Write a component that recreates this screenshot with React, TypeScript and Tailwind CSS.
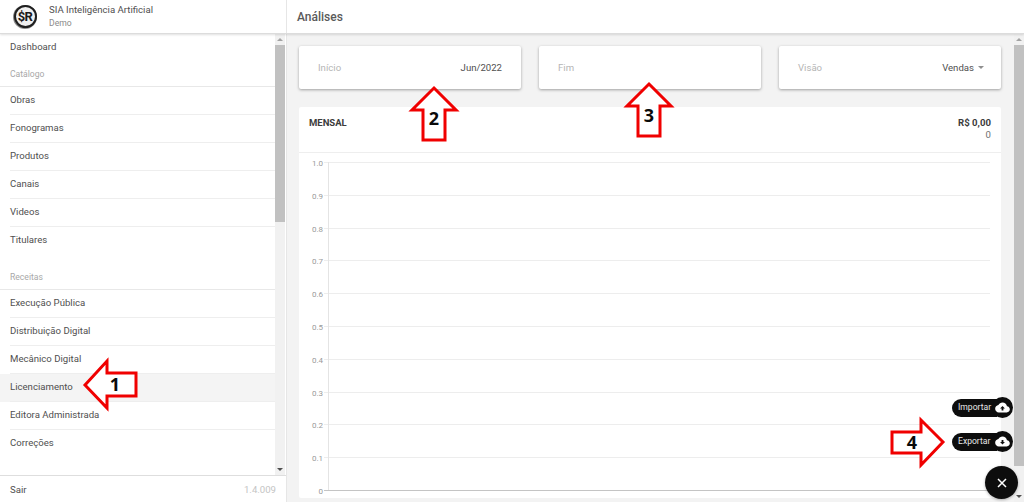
import React from "react";

const ScrollBar = ({ thumbHeight }: { thumbHeight: number }) => (
  <div className="w-[10px] shrink-0 bg-[#f1f1f1] flex flex-col items-center">
    <div className="h-[11px] shrink-0 flex items-center justify-center">
      <div className="w-0 h-0 border-x-[3px] border-x-transparent border-b-[3px] border-b-[#a3a3a3]" />
    </div>
    <div className="flex-1 w-full">
      <div className="w-full bg-[#c1c1c1]" style={{ height: thumbHeight }} />
    </div>
    <div className="h-[11px] shrink-0 flex items-center justify-center">
      <div className="w-0 h-0 border-x-[3px] border-x-transparent border-t-[3px] border-t-[#505050]" />
    </div>
  </div>
);

const Item = ({ label }: { label: string }) => (
  <div className="h-[28px] pb-px pl-[10px] flex items-center">
    <span className="text-[9.6px] text-[#4f4f4f]">{label}</span>
  </div>
);

const Row = ({ label, active }: { label: string; active?: boolean }) => (
  <div className={active ? "bg-[#f4f4f4]" : ""}>
    <div className="h-[27px] pl-[10px] flex items-center">
      <span className="text-[9.6px] text-[#4f4f4f]">{label}</span>
    </div>
    <div className="ml-[10px] h-px bg-[#eeeeee]" />
  </div>
);

const Section = ({ label }: { label: string }) => (
  <div className="h-[25px] flex flex-col justify-end">
    <div className="pl-[10px] pb-[6px] text-[8.6px] text-[#a8a8a8] leading-[12px]">{label}</div>
    <div className="h-px bg-[#e8e8e8]" />
  </div>
);

const Filter = ({ label, value, caret }: { label: string; value?: string; caret?: boolean }) => (
  <div className="flex-1 h-[43px] bg-white rounded-[2px] shadow-[0_1px_3px_rgba(0,0,0,0.35)] pt-px pl-[19px] pr-[19px] flex items-center justify-between">
    <span className="text-[9.6px] text-[#b5b5b5]">{label}</span>
    {value && (
      <span className="flex items-center gap-[4px] text-[9.6px] text-[#4f4f4f]">
        {value}
        {caret && <span className="w-0 h-0 border-x-[3.5px] border-x-transparent border-t-[3.5px] border-t-[#8f8f8f] mr-[-2px]" />}
      </span>
    )}
  </div>
);

const Cloud = ({ up }: { up?: boolean }) => (
  <svg width="15" height="11" viewBox="0 0 24 18">
    <path
      fill="#fff"
      d="M19.35 7.04C18.67 3.59 15.64 1 12 1 9.11 1 6.6 2.64 5.35 5.04 2.34 5.36 0 7.91 0 11c0 3.31 2.69 6 6 6h13c2.76 0 5-2.24 5-5 0-2.64-2.05-4.78-4.65-4.96z"
    />
    {up ? (
      <path fill="#111" d="M12 6.500 8 10.500H10.500V14H13.500V10.500H16Z" />
    ) : (
      <path fill="#111" d="M10.500 6.500H13.500V10H16L12 14 8 10H10.500Z" />
    )}
  </svg>
);

const Pill = ({ label, up }: { label: string; up?: boolean }) => (
  <div className="w-[61px] h-[21px] flex items-center">
    <div className="w-[45px] h-[18px] mr-[-5px] bg-[#0d0d0d] rounded-l-full pl-[6px] flex items-center">
      <span className="text-[8.6px] text-[#e8e8e8]">{label}</span>
    </div>
    <div className="w-[21px] h-[21px] shrink-0 rounded-full bg-[#0d0d0d] flex items-center justify-center">
      <Cloud up={up} />
    </div>
  </div>
);

const ticks = ["1.0", "0.9", "0.8", "0.7", "0.6", "0.5", "0.4", "0.3", "0.2", "0.1", "0"];

const Chart = () => (
  <svg width="702" height="345" className="block" fontFamily="Roboto, sans-serif">
    {ticks.map((t, i) => {
      const y = Math.round(9 + i * 32.8) + 0.5;
      const last = i === ticks.length - 1;
      return (
        <g key={t}>
          <text x="24" y={y + 3} textAnchor="end" fontSize="8" fill="#9a9a9a">
            {t}
          </text>
          <line x1="25" x2="691" y1={y} y2={y} stroke={last ? "#c4c4c4" : "#ededed"} strokeWidth="1" />
        </g>
      );
    })}
    <line x1="29.5" x2="29.500" y1="9" y2="337" stroke="#e4e4e4" />
  </svg>
);

type Pt = [number, number];
const Arrow = ({ points, num, nx, ny }: { points: Pt[]; num: string; nx: number; ny: number }) => (
  <g>
    <polygon
      points={points.map((p) => p.join(",")).join(" ")}
      fill="#fff"
      stroke="#f00000"
      strokeWidth="3"
      strokeLinejoin="miter"
    />
    <text x={nx} y={ny} textAnchor="middle" fontSize="18" fontWeight="700" fill="#0a0a0a" fontFamily="'Open Sans', sans-serif">
      {num}
    </text>
  </g>
);

export default function App() {
  return (
    <div className="relative w-[1024px] h-[502px] overflow-hidden bg-[#f3f3f3] font-['Roboto',sans-serif] flex flex-col">
      <header className="h-[34px] shrink-0 bg-white flex border-b border-[#dcdcdc] shadow-[0_1px_2px_rgba(0,0,0,0.12)] z-10">
        <div className="w-[287px] shrink-0 flex items-center border-r border-[#e6e6e6] pl-[13px]">
          <div className="w-[24px] h-[24px] rounded-full bg-[#8a8a8a] flex items-center justify-center">
            <div className="w-[23px] h-[23px] rounded-full bg-[#f0f0f0] border-[2px] border-[#1f1f1f] flex items-center justify-center">
              <span className="text-[13px] font-bold text-[#1a1a1a] leading-none tracking-[-0.7px]">$R</span>
            </div>
          </div>
          <div className="ml-[12px] flex flex-col">
            <span className="text-[9.6px] leading-[12px] text-[#4f4f4f]">SIA Inteligência Artificial</span>
            <span className="text-[8.6px] leading-[12px] mt-[1px] text-[#8a8a8a]">Demo</span>
          </div>
        </div>
        <div className="flex-1 flex items-center pl-[10px]">
          <span className="text-[12px] font-medium text-[#5a5a5a]">Análises</span>
        </div>
      </header>

      <div className="flex-1 min-h-0 flex">
        <aside className="w-[287px] shrink-0 bg-white border-r border-[#e6e6e6] flex flex-col">
          <div className="flex-1 min-h-0 flex pr-px">
            <nav className="flex-1 overflow-hidden">
              <Item label="Dashboard" />
              <Section label="Catálogo" />
              <Row label="Obras" />
              <Row label="Fonogramas" />
              <Row label="Produtos" />
              <Row label="Canais" />
              <Row label="Videos" />
              <Item label="Titulares" />
              <div className="h-[10px]" />
              <Section label="Receitas" />
              <Row label="Execução Pública" />
              <Row label="Distribuição Digital" />
              <Row label="Mecânico Digital" />
              <Row label="Licenciamento" active />
              <Row label="Editora Administrada" />
              <Item label="Correções" />
            </nav>
            <ScrollBar thumbHeight={177} />
          </div>
          <div className="h-[27px] shrink-0 border-t border-[#dedede] pl-[10px] pr-[10px] pt-[3px] flex items-center justify-between">
            <span className="text-[9.6px] text-[#4f4f4f]">Sair</span>
            <span className="text-[9.6px] text-[#c4c4c4]">1.4.009</span>
          </div>
        </aside>

        <main className="flex-1 min-w-0 flex">
          <div className="flex-1 min-w-0 overflow-hidden pl-[12px] pr-[13px] pt-[12px]">
            <div className="flex gap-[18px]">
              <Filter label="Início" value="Jun/2022" />
              <Filter label="Fim" />
              <Filter label="Visão" value="Vendas" caret />
            </div>
            <section className="mt-[18px] bg-white rounded-[2px]">
              <div className="h-[46px] border-b border-[#eeeeee] px-[10px] pt-[9px] flex justify-between">
                <span className="text-[9.5px] leading-[14px] font-bold text-[#3c3c3c]">MENSAL</span>
                <div className="flex flex-col items-end">
                  <span className="text-[9.6px] leading-[13px] font-bold text-[#3c3c3c]">R$ 0,00</span>
                  <span className="text-[9.6px] leading-[12px] text-[#707070]">0</span>
                </div>
              </div>
              <Chart />
            </section>
          </div>
          <ScrollBar thumbHeight={421} />
        </main>
      </div>

      <svg className="absolute inset-0 pointer-events-none z-20" width="1024" height="502">
        <Arrow points={[[85, 385], [107, 361], [107, 373], [136, 373], [136, 396], [107, 396], [107, 408]]} num="1" nx={115} ny={391} />
        <Arrow points={[[434, 88], [456, 110], [445, 110], [445, 140], [423, 140], [423, 110], [412, 110]]} num="2" nx={434} ny={125} />
        <Arrow points={[[649, 84], [671, 106], [660, 106], [660, 136], [638, 136], [638, 106], [627, 106]]} num="3" nx={649} ny={122} />
        <Arrow points={[[943, 442], [921, 420], [921, 432], [892, 432], [892, 453], [921, 453], [921, 465]]} num="4" nx={912} ny={449} />
      </svg>

      <div className="absolute left-[952px] top-[397px] z-30 flex flex-col gap-[13px]">
        <Pill label="Importar" up />
        <Pill label="Exportar" />
      </div>
      <div className="absolute left-[985px] top-[466px] z-30 w-[33px] h-[33px] rounded-full bg-[#0d0d0d] flex items-center justify-center shadow-[0_1px_3px_rgba(0,0,0,0.3)]">
        <svg width="10" height="10" viewBox="0 0 10 10">
          <path d="M1 1 9 9M9 1 1 9" stroke="#fff" strokeWidth="1.5" />
        </svg>
      </div>
    </div>
  );
}
